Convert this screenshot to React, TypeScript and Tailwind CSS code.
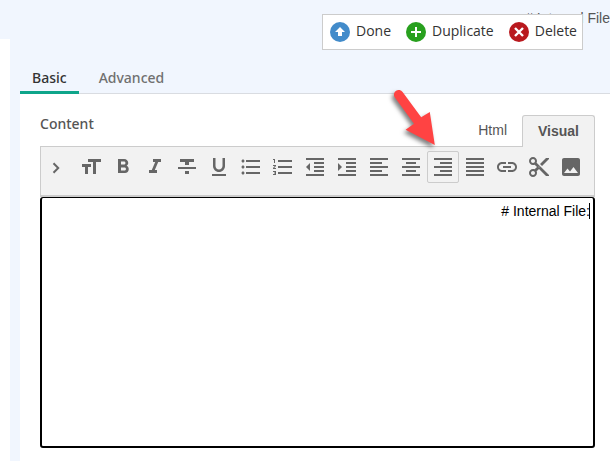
import React from "react";
import {
  MdFormatSize, MdFormatBold, MdFormatItalic, MdFormatStrikethrough,
  MdFormatUnderlined, MdFormatListBulleted, MdFormatListNumbered, MdFormatIndentDecrease,
  MdFormatIndentIncrease, MdFormatAlignLeft, MdFormatAlignCenter, MdFormatAlignRight,
  MdFormatAlignJustify, MdInsertLink, MdContentCut, MdImage,
} from "react-icons/md";

const tools = [
  { label: "Font size", Icon: MdFormatSize },
  { label: "Bold", Icon: MdFormatBold },
  { label: "Italic", Icon: MdFormatItalic },
  { label: "Strikethrough", Icon: MdFormatStrikethrough },
  { label: "Underline", Icon: MdFormatUnderlined },
  { label: "Bulleted list", Icon: MdFormatListBulleted },
  { label: "Numbered list", Icon: MdFormatListNumbered },
  { label: "Outdent", Icon: MdFormatIndentDecrease },
  { label: "Indent", Icon: MdFormatIndentIncrease },
  { label: "Align left", Icon: MdFormatAlignLeft },
  { label: "Align center", Icon: MdFormatAlignCenter },
  { label: "Align right", Icon: MdFormatAlignRight, active: true },
  { label: "Justify", Icon: MdFormatAlignJustify },
  { label: "Link", Icon: MdInsertLink },
  { label: "Cut", Icon: MdContentCut },
  { label: "Image", Icon: MdImage },
];

const actions = [
  { label: "Done", color: "#428bca", glyph: <path d="M10 5L15 10H12V14H8V10H5Z" fill="#fff" /> },
  { label: "Duplicate", color: "#28a01e", glyph: <path d="M10 5V15M5 10H15" stroke="#fff" strokeWidth="2" /> },
  { label: "Delete", color: "#b9191e", glyph: <path d="M6 6L14 14M14 6L6 14" stroke="#fff" strokeWidth="2.4" /> },
];

function ActionBar() {
  return (
    <div className="absolute top-3.5 right-[27px] flex h-9 items-center gap-[15px] border border-[#ccc] bg-white pr-[5px] pl-[7px]">
      {actions.map((a) => (
        <button key={a.label} type="button" className="flex items-center gap-1.5 text-sm leading-5 text-[#333]">
          <svg width="20" height="20" viewBox="0 0 20 20" aria-hidden="true">
            <circle cx="10" cy="10" r="10" fill={a.color} />
            {a.glyph}
          </svg>
          <span className="pb-0.5">{a.label}</span>
        </button>
      ))}
    </div>
  );
}

function Pointer() {
  return (
    <svg className="pointer-events-none absolute -top-[61px] -left-9 overflow-visible drop-shadow-[-2px_3px_2px_rgba(0,0,0,0.5)]" width="48" height="56" viewBox="0 0 48 56" aria-hidden="true">
      <path d="M11.600 2.100L30.200 27.300L38.800 22L43.800 55L14.600 39.700L23 33.800L3.700 7.300A4.700 4.700 0 0 1 11.600 2.100Z" fill="#ff4343" />
    </svg>
  );
}

export default function App() {
  return (
    <div className="relative flex min-h-screen flex-col bg-[#f1f6fe] font-['Open_Sans',sans-serif]">
      <header className="flex h-[39px] justify-end overflow-hidden pt-2 font-['Liberation_Sans',sans-serif] text-sm leading-5 text-[#555]">
        <span># Internal File</span>
      </header>
      <ActionBar />
      <div className="flex flex-1 gap-2.5">
        <aside className="w-2.5 bg-white" />
        <main className="flex min-w-0 flex-1 flex-col">
          <nav className="flex h-[55px] items-end border-b border-[#d9dce1] font-['Noto_Sans',sans-serif] text-sm leading-5 font-medium">
            <button type="button" className="-mb-px border-b-[3px] border-[#0ea58a] px-3 pb-[3px] text-[#333]">Basic</button>
            <button type="button" className="-mb-px border-b-[3px] border-transparent px-5 pb-[3px] text-[#707070]">Advanced</button>
          </nav>
          <section className="flex flex-1 flex-col bg-white pr-[15px] pb-[13px] pl-5">
            <div className="flex items-start pt-5">
              <label htmlFor="content" className="flex-1 font-['Noto_Sans',sans-serif] text-sm leading-5 font-medium text-[#555]">Content</label>
              <div className="flex pt-px font-['Liberation_Sans',sans-serif] text-sm leading-[30px]">
                <button type="button" className="px-[15px] pb-px text-[#555]">Html</button>
                <button type="button" className="relative z-10 -mb-px rounded-t-[3px] border border-b-0 border-[#ccc] bg-[#f2f2f2] px-[15px] pb-px font-bold text-[#555]">Visual</button>
              </div>
            </div>
            <div className="flex h-[51px] items-start border border-b-2 border-[#ccc] bg-[#f2f2f2] pt-1 pr-[7px] text-[#666]">
              <button type="button" aria-label="More" className="flex h-[34px] w-[34px] items-center pl-[5px]">
                <svg width="20" height="20" viewBox="0 0 20 20" fill="none" stroke="currentColor" strokeWidth="2" aria-hidden="true">
                  <path d="M7.500 5.300L12.200 10L7.500 14.700" />
                </svg>
              </button>
              {tools.map(({ label, Icon, active }) => (
                <div key={label} className="relative">
                  <button type="button" aria-label={label} className={active ? "flex size-8 items-center justify-center rounded-xs border border-[#ccc]" : "flex size-8 items-center justify-center"}>
                    <Icon className="size-6 shrink-0" />
                  </button>
                  {active && <Pointer />}
                </div>
              ))}
            </div>
            <div className="relative flex flex-1">
              <textarea
                id="content"
                defaultValue="# Internal File:"
                className="block w-full resize-none rounded-[3px] border-2 border-t border-black bg-white px-[3px] py-1 text-right font-['Liberation_Sans',sans-serif] text-sm leading-[18px] text-black outline-none"
              />
              <span className="absolute top-1.5 right-[5px] h-4 w-px bg-black" aria-hidden="true" />
            </div>
          </section>
        </main>
      </div>
    </div>
  );
}
